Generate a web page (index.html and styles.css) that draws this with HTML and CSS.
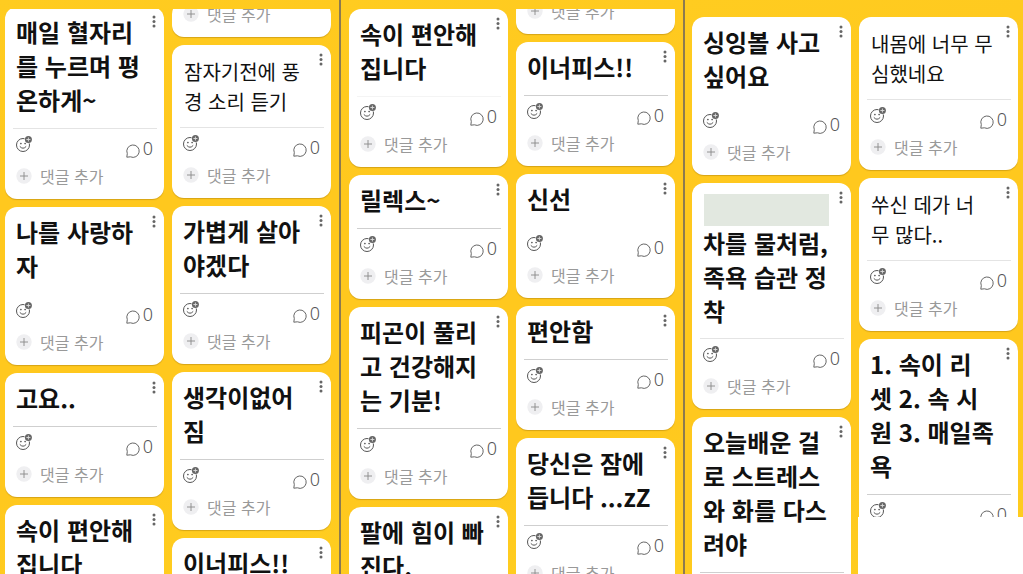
FILE: index.html
```html
<!DOCTYPE html>
<html lang="ko">
<head>
<meta charset="utf-8">
<title>담벼락</title>
<link rel="stylesheet" href="styles.css">
</head>
<body>
<svg class="sprite" aria-hidden="true">
  <symbol id="dots" viewBox="0 0 4 14"><circle cx="2" cy="2" r="1.5"/><circle cx="2" cy="6.5" r="1.5"/><circle cx="2" cy="11" r="1.5"/></symbol>
  <symbol id="smile" viewBox="0 0 16 16">
    <circle cx="7" cy="9" r="6.5" fill="none" stroke="#555" stroke-width="1"/>
    <circle cx="4.9" cy="7.6" r=".8" fill="#444"/><circle cx="9.1" cy="7.6" r=".8" fill="#444"/>
    <path d="M3.8 10.4Q7 14 10.2 10.4" fill="none" stroke="#555" stroke-width="1"/>
    <circle cx="12.4" cy="3.5" r="4" fill="#fff"/><circle cx="12.4" cy="3.5" r="3.5" fill="#666"/>
    <path d="M12.4 1.5v4M10.4 3.5h4" stroke="#ddd" stroke-width=".9"/>
  </symbol>
  <symbol id="chat" viewBox="0 0 14 14"><path d="M.8 13.2L1.3 9.6A6.2 6.2 0 1 1 4.4 12.8Z" fill="none" stroke="#666" stroke-width="1" stroke-linejoin="round"/></symbol>
  <symbol id="plus" viewBox="0 0 16 16"><circle cx="8" cy="8" r="7.7" fill="#efeff1"/><path d="M8 4v8M4 8h8" stroke="#888" stroke-width=".9"/></symbol>
</svg>
<main class="board">
  <section class="panel">
    <div class="column lift">
      <article class="card">
        <button class="more" aria-label="더보기"><svg><use href="#dots"/></svg></button>
        <h2 class="title">매일 혈자리<br>를 누르며 평<br>온하게~</h2>
        <footer class="foot light">
          <div class="stats"><button class="react" aria-label="반응 추가"><svg><use href="#smile"/></svg></button><button class="count" aria-label="댓글 0개"><svg><use href="#chat"/></svg><span>0</span></button></div>
          <button class="add"><svg><use href="#plus"/></svg>댓글 추가</button>
        </footer>
      </article>
      <article class="card">
        <button class="more" aria-label="더보기"><svg><use href="#dots"/></svg></button>
        <h2 class="title">나를 사랑하<br>자</h2>
        <footer class="foot clear">
          <div class="stats"><button class="react" aria-label="반응 추가"><svg><use href="#smile"/></svg></button><button class="count" aria-label="댓글 0개"><svg><use href="#chat"/></svg><span>0</span></button></div>
          <button class="add"><svg><use href="#plus"/></svg>댓글 추가</button>
        </footer>
      </article>
      <article class="card">
        <button class="more" aria-label="더보기"><svg><use href="#dots"/></svg></button>
        <h2 class="title">고요..</h2>
        <footer class="foot">
          <div class="stats"><button class="react" aria-label="반응 추가"><svg><use href="#smile"/></svg></button><button class="count" aria-label="댓글 0개"><svg><use href="#chat"/></svg><span>0</span></button></div>
          <button class="add"><svg><use href="#plus"/></svg>댓글 추가</button>
        </footer>
      </article>
      <article class="card">
        <button class="more" aria-label="더보기"><svg><use href="#dots"/></svg></button>
        <h2 class="title">속이 편안해<br>집니다</h2>
      </article>
    </div>
    <div class="column scrolled">
      <article class="card"><button class="add"><svg><use href="#plus"/></svg>댓글 추가</button></article>
      <article class="card">
        <button class="more" aria-label="더보기"><svg><use href="#dots"/></svg></button>
        <p class="text">잠자기전에 풍<br>경 소리 듣기</p>
        <footer class="foot light">
          <div class="stats"><button class="react" aria-label="반응 추가"><svg><use href="#smile"/></svg></button><button class="count" aria-label="댓글 0개"><svg><use href="#chat"/></svg><span>0</span></button></div>
          <button class="add"><svg><use href="#plus"/></svg>댓글 추가</button>
        </footer>
      </article>
      <article class="card">
        <button class="more" aria-label="더보기"><svg><use href="#dots"/></svg></button>
        <h2 class="title">가볍게 살아<br>야겠다</h2>
        <footer class="foot">
          <div class="stats"><button class="react" aria-label="반응 추가"><svg><use href="#smile"/></svg></button><button class="count" aria-label="댓글 0개"><svg><use href="#chat"/></svg><span>0</span></button></div>
          <button class="add"><svg><use href="#plus"/></svg>댓글 추가</button>
        </footer>
      </article>
      <article class="card">
        <button class="more" aria-label="더보기"><svg><use href="#dots"/></svg></button>
        <h2 class="title">생각이없어<br>짐</h2>
        <footer class="foot">
          <div class="stats"><button class="react" aria-label="반응 추가"><svg><use href="#smile"/></svg></button><button class="count" aria-label="댓글 0개"><svg><use href="#chat"/></svg><span>0</span></button></div>
          <button class="add"><svg><use href="#plus"/></svg>댓글 추가</button>
        </footer>
      </article>
      <article class="card">
        <button class="more" aria-label="더보기"><svg><use href="#dots"/></svg></button>
        <h2 class="title">이너피스!!</h2>
      </article>
    </div>
  </section>

  <section class="panel middle">
    <div class="column">
      <article class="card">
        <button class="more" aria-label="더보기"><svg><use href="#dots"/></svg></button>
        <h2 class="title">속이 편안해<br>집니다</h2>
        <footer class="foot faint">
          <div class="stats"><button class="react" aria-label="반응 추가"><svg><use href="#smile"/></svg></button><button class="count" aria-label="댓글 0개"><svg><use href="#chat"/></svg><span>0</span></button></div>
          <button class="add"><svg><use href="#plus"/></svg>댓글 추가</button>
        </footer>
      </article>
      <article class="card">
        <button class="more" aria-label="더보기"><svg><use href="#dots"/></svg></button>
        <h2 class="title">릴렉스~</h2>
        <footer class="foot">
          <div class="stats"><button class="react" aria-label="반응 추가"><svg><use href="#smile"/></svg></button><button class="count" aria-label="댓글 0개"><svg><use href="#chat"/></svg><span>0</span></button></div>
          <button class="add"><svg><use href="#plus"/></svg>댓글 추가</button>
        </footer>
      </article>
      <article class="card">
        <button class="more" aria-label="더보기"><svg><use href="#dots"/></svg></button>
        <h2 class="title">피곤이 풀리<br>고 건강해지<br>는 기분!</h2>
        <footer class="foot">
          <div class="stats"><button class="react" aria-label="반응 추가"><svg><use href="#smile"/></svg></button><button class="count" aria-label="댓글 0개"><svg><use href="#chat"/></svg><span>0</span></button></div>
          <button class="add"><svg><use href="#plus"/></svg>댓글 추가</button>
        </footer>
      </article>
      <article class="card">
        <button class="more" aria-label="더보기"><svg><use href="#dots"/></svg></button>
        <h2 class="title">팔에 힘이 빠<br>진다.</h2>
      </article>
    </div>
    <div class="column scrolled-far">
      <article class="card"><button class="add"><svg><use href="#plus"/></svg>댓글 추가</button></article>
      <article class="card">
        <button class="more" aria-label="더보기"><svg><use href="#dots"/></svg></button>
        <h2 class="title">이너피스!!</h2>
        <footer class="foot">
          <div class="stats"><button class="react" aria-label="반응 추가"><svg><use href="#smile"/></svg></button><button class="count" aria-label="댓글 0개"><svg><use href="#chat"/></svg><span>0</span></button></div>
          <button class="add"><svg><use href="#plus"/></svg>댓글 추가</button>
        </footer>
      </article>
      <article class="card">
        <button class="more" aria-label="더보기"><svg><use href="#dots"/></svg></button>
        <h2 class="title">신선</h2>
        <footer class="foot clear">
          <div class="stats"><button class="react" aria-label="반응 추가"><svg><use href="#smile"/></svg></button><button class="count" aria-label="댓글 0개"><svg><use href="#chat"/></svg><span>0</span></button></div>
          <button class="add"><svg><use href="#plus"/></svg>댓글 추가</button>
        </footer>
      </article>
      <article class="card">
        <button class="more" aria-label="더보기"><svg><use href="#dots"/></svg></button>
        <h2 class="title">편안함</h2>
        <footer class="foot">
          <div class="stats"><button class="react" aria-label="반응 추가"><svg><use href="#smile"/></svg></button><button class="count" aria-label="댓글 0개"><svg><use href="#chat"/></svg><span>0</span></button></div>
          <button class="add"><svg><use href="#plus"/></svg>댓글 추가</button>
        </footer>
      </article>
      <article class="card">
        <button class="more" aria-label="더보기"><svg><use href="#dots"/></svg></button>
        <h2 class="title">당신은 잠에<br>듭니다 ...zZ</h2>
        <footer class="foot">
          <div class="stats"><button class="react" aria-label="반응 추가"><svg><use href="#smile"/></svg></button><button class="count" aria-label="댓글 0개"><svg><use href="#chat"/></svg><span>0</span></button></div>
          <button class="add"><svg><use href="#plus"/></svg>댓글 추가</button>
        </footer>
      </article>
    </div>
  </section>

  <section class="panel last">
    <div class="column">
      <article class="card">
        <button class="more" aria-label="더보기"><svg><use href="#dots"/></svg></button>
        <h2 class="title">싱잉볼 사고<br>싶어요</h2>
        <footer class="foot clear">
          <div class="stats"><button class="react" aria-label="반응 추가"><svg><use href="#smile"/></svg></button><button class="count" aria-label="댓글 0개"><svg><use href="#chat"/></svg><span>0</span></button></div>
          <button class="add"><svg><use href="#plus"/></svg>댓글 추가</button>
        </footer>
      </article>
      <article class="card">
        <button class="more" aria-label="더보기"><svg><use href="#dots"/></svg></button>
        <div class="mask"></div>
        <h2 class="title">차를 물처럼,<br>족욕 습관 정<br>착</h2>
        <footer class="foot light">
          <div class="stats"><button class="react" aria-label="반응 추가"><svg><use href="#smile"/></svg></button><button class="count" aria-label="댓글 0개"><svg><use href="#chat"/></svg><span>0</span></button></div>
          <button class="add"><svg><use href="#plus"/></svg>댓글 추가</button>
        </footer>
      </article>
      <article class="card">
        <button class="more" aria-label="더보기"><svg><use href="#dots"/></svg></button>
        <h2 class="title">오늘배운 걸<br>로 스트레스<br>와 화를 다스<br>려야</h2>
        <footer class="foot">
          <div class="stats"></div>
        </footer>
      </article>
    </div>
    <div class="column">
      <article class="card">
        <button class="more" aria-label="더보기"><svg><use href="#dots"/></svg></button>
        <p class="text">내몸에 너무 무<br>심했네요</p>
        <footer class="foot light">
          <div class="stats"><button class="react" aria-label="반응 추가"><svg><use href="#smile"/></svg></button><button class="count" aria-label="댓글 0개"><svg><use href="#chat"/></svg><span>0</span></button></div>
          <button class="add"><svg><use href="#plus"/></svg>댓글 추가</button>
        </footer>
      </article>
      <article class="card">
        <button class="more" aria-label="더보기"><svg><use href="#dots"/></svg></button>
        <p class="text">쑤신 데가 너<br>무 많다..</p>
        <footer class="foot light">
          <div class="stats"><button class="react" aria-label="반응 추가"><svg><use href="#smile"/></svg></button><button class="count" aria-label="댓글 0개"><svg><use href="#chat"/></svg><span>0</span></button></div>
          <button class="add"><svg><use href="#plus"/></svg>댓글 추가</button>
        </footer>
      </article>
      <article class="card">
        <button class="more" aria-label="더보기"><svg><use href="#dots"/></svg></button>
        <h2 class="title">1. 속이 리<br>셋 2. 속 시<br>원 3. 매일족<br>욕</h2>
        <footer class="foot">
          <div class="stats"><button class="react" aria-label="반응 추가"><svg><use href="#smile"/></svg></button><button class="count" aria-label="댓글 0개"><svg><use href="#chat"/></svg><span>0</span></button></div>
        </footer>
      </article>
    </div>
  </section>
  <div class="blank"></div>
</main>
</body>
</html>
```

FILE: styles.css
```css
* { box-sizing: border-box; }
body {
  margin: 0;
  font-family: "Noto Sans CJK KR", sans-serif;
  color: #111;
}
.sprite { position: absolute; width: 0; height: 0; }
button {
  display: flex;
  margin: 0;
  padding: 0;
  border: 0;
  background: none;
  font: inherit;
  color: inherit;
  cursor: pointer;
}
.board {
  position: relative;
  display: grid;
  grid-template-columns: 339fr 344fr 340fr;
  height: 100vh;
  overflow: hidden;
  background: #ffc81f;
}
.panel {
  display: grid;
  grid-template-columns: 1fr 1fr;
  gap: 8px;
  min-height: 0;
  padding: 9px 8px 0 5px;
  background: linear-gradient(165deg, #ffcc20 0, #ffc81e 30%, #ffc81e 75%, #ffce20 100%);
}
.middle, .last { border-left: 2px solid #8c7a50; }
.middle { padding-left: 8px; }
.last { padding: 17px 5px 0 7px; }
.column {
  display: flex;
  flex-direction: column;
  gap: 8px;
  min-width: 0;
  min-height: 0;
  overflow: hidden;
}
/* columns scrolled part of the way past their first card */
.lift .card:first-child { margin-top: -2px; }
.scrolled .card:first-child { margin-top: -7px; }
.scrolled-far .card:first-child { margin-top: -10px; }
.card {
  position: relative;
  flex: none;
  border-radius: 12px;
  background: #fff;
  box-shadow: 0 1px 1px rgba(120, 80, 0, .3);
}
.more {
  position: absolute;
  top: 8px;
  right: 8px;
  fill: #666;
}
.more svg { width: 4px; height: 14px; }
.title, .text {
  margin: 0;
  white-space: nowrap;
}
.title {
  padding: 8px 0 11px 11px;
  font-size: 24px;
  line-height: 34px;
  font-weight: 700;
}
.text {
  padding: 12px 0 10px 12px;
  font-size: 20px;
  line-height: 30px;
}
.mask {
  height: 32px;
  margin: 11px 22px 0 12px;
  background: #e2e8e0;
}
.mask + .title { padding-top: 0; padding-bottom: 10px; }
.foot::before {
  content: "";
  display: block;
  height: 1px;
  margin: 0 7px 0 8px;
  background: #cfcfcf;
}
.light::before { background: #e4e4e4; }
.faint::before { background: #f4f4f4; }
.clear::before { background: transparent; }
.stats {
  display: flex;
  justify-content: space-between;
  height: 35px;
  padding: 7px 11px 0 11px;
}
.react { align-self: flex-start; }
.react svg, .add svg { width: 16px; height: 16px; }
.count {
  align-items: center;
  gap: 3px;
  height: 24px;
  font-family: "Noto Sans", sans-serif;
  font-size: 18px;
  line-height: 24px;
  font-weight: 300;
  color: #555;
}
.count svg { width: 14px; height: 14px; margin-top: 6px; }
.add {
  align-items: center;
  gap: 8px;
  height: 24px;
  margin: 0 11px 11px;
  font-size: 16px;
  line-height: 24px;
  color: #999;
}
.blank {
  position: absolute;
  right: 0;
  bottom: 0;
  width: 165px;
  height: 57px;
  background: #fff;
}
```
